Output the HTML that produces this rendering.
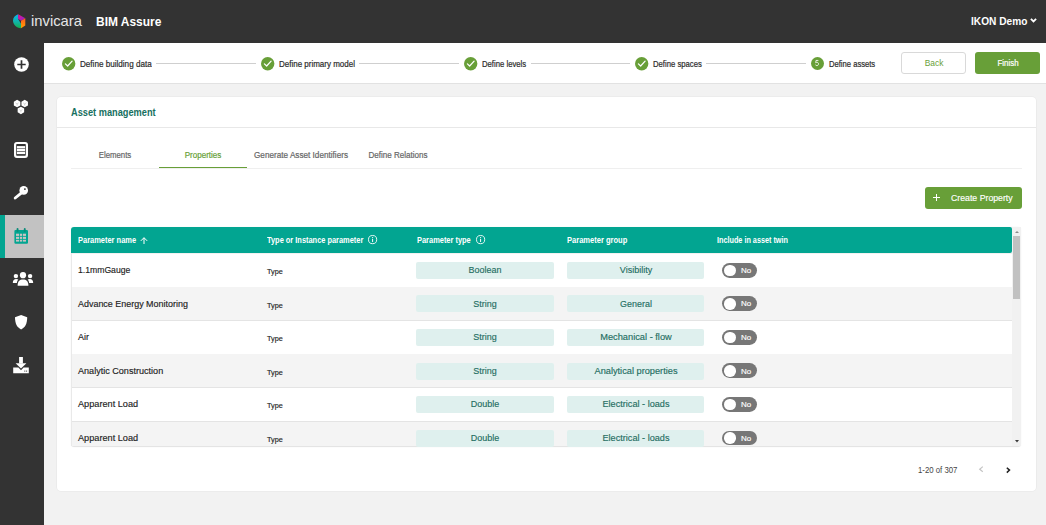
<!DOCTYPE html>
<html><head><meta charset="utf-8">
<style>
*{box-sizing:border-box;margin:0;padding:0}
html,body{width:1046px;height:525px;overflow:hidden;background:#f2f2f2;font-family:"Liberation Sans",sans-serif;color:#333;position:relative}
.abs{position:absolute}
.t{line-height:1;white-space:nowrap}
svg{position:absolute;overflow:visible}
</style></head><body>
<div class="abs" style="left:0.00px;top:0.00px;width:1046.00px;height:43.00px;background:#333333"></div>
<svg style="left:0;top:0" width="1" height="1">
<defs>
<linearGradient id="gc" x1="0" y1="0" x2="0" y2="1"><stop offset="0" stop-color="#0ab6f2"/><stop offset="0.55" stop-color="#12b3a6"/><stop offset="1" stop-color="#13b04c"/></linearGradient>
<linearGradient id="gm" x1="0" y1="0" x2="1" y2="1"><stop offset="0" stop-color="#e8188e"/><stop offset="1" stop-color="#8a1fcf"/></linearGradient>
<linearGradient id="go" x1="0" y1="0" x2="0" y2="1"><stop offset="0" stop-color="#ff5a1e"/><stop offset="1" stop-color="#ffa000"/></linearGradient>
</defs>
<path d="M18.2 14.2 C15.4 15.2 13.1 17.2 13.0 20.6 C12.9 24.6 16.4 27.9 21.0 28.3 L21.0 23.8 L18.0 18.7 Z" fill="url(#gc)"/>
<path d="M18.2 14.2 L25.3 18.2 L21.0 20.8 L18.0 18.7 Z" fill="url(#gm)"/>
<path d="M25.3 18.2 L25.3 25.6 L21.0 28.3 L21.0 20.8 Z" fill="url(#go)"/>
</svg>
<div class="abs t" style="left:31.30px;top:13.84px;font-size:14.6px;color:#e6e6e6;font-weight:normal;transform:scaleX(1.0134);transform-origin:0 0;">invicara</div>
<div class="abs t" style="left:96.40px;top:14.80px;font-size:13px;color:#fff;font-weight:bold;transform:scaleX(0.9207);transform-origin:0 0;">BIM Assure</div>
<div class="abs t" style="left:970.60px;top:15.64px;font-size:10.7px;color:#fff;font-weight:bold;transform:scaleX(0.9487);transform-origin:0 0;">IKON Demo</div>
<svg style="left:1029.8px;top:18.2px" width="7" height="5" viewBox="0 0 7 5"><path d="M0.9 0.9 L3.5 3.5 L6.1 0.9" stroke="#fff" stroke-width="1.8" fill="none"/></svg>
<div class="abs" style="left:0.00px;top:43.00px;width:43.50px;height:482.00px;background:#333333"></div>
<div class="abs" style="left:0.00px;top:215.00px;width:43.50px;height:43.00px;background:#c2c2c2"></div>
<div class="abs" style="left:0.00px;top:215.00px;width:5.00px;height:43.00px;background:#02a591"></div>
<svg style="left:13.6px;top:57px" width="15" height="15" viewBox="0 0 15 15">
<circle cx="7.5" cy="7.5" r="7.3" fill="#fff"/><path d="M7.5 3.3V11.7M3.3 7.5H11.7" stroke="#333" stroke-width="1.7"/></svg>
<svg style="left:0;top:0" width="1" height="1">
<polygon points="17.10,99.85 20.35,101.72 20.35,105.47 17.10,107.35 13.85,105.47 13.85,101.72" fill="#fff"/>
<polygon points="24.70,99.85 27.95,101.72 27.95,105.47 24.70,107.35 21.45,105.47 21.45,101.72" fill="#fff"/>
<polygon points="20.90,106.65 24.15,108.53 24.15,112.28 20.90,114.15 17.65,112.28 17.65,108.53" fill="#fff"/>
<path d="M17.1 103.9 L17.1 105.6 M17.1 103.9 L15.5 102.8 M17.1 103.9 L18.7 102.8 M24.7 103.9 L24.7 105.6 M24.7 103.9 L23.1 102.8 M24.7 103.9 L26.3 102.8 M20.9 110.7 L20.9 112.4 M20.9 110.7 L19.3 109.6 M20.9 110.7 L22.5 109.6" stroke="#b5b5b5" stroke-width="0.55"/>
</svg>
<svg style="left:0;top:0" width="1" height="1">
<rect x="15.1" y="143.0" width="11.8" height="13.8" rx="1.8" fill="none" stroke="#fff" stroke-width="2.2"/>
<rect x="16.9" y="146.1" width="8.2" height="2.3" fill="#fff"/><rect x="16.9" y="148.9" width="8.2" height="2.3" fill="#fff"/><rect x="16.9" y="151.8" width="8.2" height="2.3" fill="#fff"/>
</svg>
<svg style="left:0;top:0" width="1" height="1">
<circle cx="23.7" cy="190.4" r="4.3" fill="#fff"/><circle cx="24.9" cy="189.1" r="0.95" fill="#333"/>
<path d="M21.5 192.8 L15.2 198.0" stroke="#fff" stroke-width="2.9" stroke-linecap="round"/>
</svg>
<svg style="left:0;top:0" width="1" height="1">
<rect x="14.4" y="229.9" width="13.6" height="13.8" rx="1.2" fill="#02a591"/>
<rect x="16.6" y="228" width="1.9" height="3.9" rx="0.95" fill="#0b8c7a"/>
<rect x="23.8" y="228" width="1.9" height="3.9" rx="0.95" fill="#0b8c7a"/>
<g fill="#c9c2c2">
<rect x="16" y="233.7" width="3.1" height="2.2"/><rect x="19.9" y="233.7" width="2.1" height="2.2"/><rect x="22.8" y="233.7" width="3.2" height="2.2"/>
<rect x="16" y="236.8" width="3.1" height="2.1"/><rect x="19.9" y="236.8" width="2.1" height="2.1"/><rect x="22.8" y="236.8" width="3.2" height="2.1"/>
<rect x="16" y="239.8" width="3.1" height="1.8"/><rect x="19.9" y="239.8" width="2.1" height="1.8"/><rect x="22.8" y="239.8" width="3.2" height="1.8"/>
</g>
</svg>
<svg style="left:13px;top:272px" width="20" height="14" viewBox="0 0 20 14">
<g fill="#fff">
<circle cx="10" cy="3.2" r="3.1"/>
<path d="M4.6 13.8 C4.6 9.2 6.6 7.4 10 7.4 C13.4 7.4 15.4 9.2 15.4 13.8 Z"/>
<circle cx="2.9" cy="4.1" r="2.2"/>
<circle cx="17.1" cy="4.1" r="2.2"/>
<path d="M-0.2 11.1 C-0.2 8.2 1.1 6.9 3.2 6.9 C4.2 6.9 4.9 7.2 5.4 7.6 C4.4 8.6 3.9 9.8 3.9 11.1 Z"/>
<path d="M20.2 11.1 C20.2 8.2 18.9 6.9 16.8 6.9 C15.8 6.9 15.1 7.2 14.6 7.6 C15.6 8.6 16.1 9.8 16.1 11.1 Z"/>
</g></svg>
<svg style="left:14.9px;top:314.7px" width="13" height="15" viewBox="0 0 13 15">
<path d="M6.1 0 L12.2 2.2 C12.2 8.6 10.2 12.4 6.1 14.4 C2.0 12.4 0 8.6 0 2.2 Z" fill="#fff"/>
</svg>
<svg style="left:12.9px;top:356.9px" width="16" height="17" viewBox="0 0 16 17">
<g fill="#fff">
<rect x="6.1" y="0" width="3.8" height="6.5"/>
<path d="M2.6 6.2 L13.4 6.2 L8 11.6 Z"/>
<path d="M0.2 10.6 L5.4 10.6 L8 13.2 L10.6 10.6 L15.8 10.6 L15.8 16.2 L0.2 16.2 Z"/>
</g>
<rect x="11.3" y="13.6" width="1" height="1" fill="#333"/><rect x="13.1" y="13.6" width="1" height="1" fill="#333"/>
</svg>
<div class="abs" style="left:43.50px;top:43.00px;width:1002.50px;height:40.00px;background:#fff"></div>
<div class="abs" style="left:43.50px;top:82.50px;width:1002.50px;height:0.80px;background:#e2e2e2"></div>
<svg style="left:61.60px;top:56.55px" width="13.4" height="13.4" viewBox="0 0 13.4 13.4">
<circle cx="6.7" cy="6.7" r="6.7" fill="#689f38"/><path d="M3.4 6.85 L5.65 9.0 L10.1 4.2" stroke="#fff" stroke-width="1.25" fill="none" stroke-linecap="round" stroke-linejoin="round"/></svg>
<div class="abs t" style="left:79.60px;top:59.55px;font-size:8.8px;color:#2b2b2b;font-weight:normal;transform:scaleX(0.9216);transform-origin:0 0;-webkit-text-stroke:0.2px #2b2b2b;">Define building data</div>
<div class="abs" style="left:156.00px;top:63.00px;width:100.20px;height:1.00px;background:#cfcfcf"></div>
<svg style="left:260.80px;top:56.55px" width="13.4" height="13.4" viewBox="0 0 13.4 13.4">
<circle cx="6.7" cy="6.7" r="6.7" fill="#689f38"/><path d="M3.4 6.85 L5.65 9.0 L10.1 4.2" stroke="#fff" stroke-width="1.25" fill="none" stroke-linecap="round" stroke-linejoin="round"/></svg>
<div class="abs t" style="left:278.60px;top:59.55px;font-size:8.8px;color:#2b2b2b;font-weight:normal;transform:scaleX(0.9088);transform-origin:0 0;-webkit-text-stroke:0.2px #2b2b2b;">Define primary model</div>
<div class="abs" style="left:359.00px;top:63.00px;width:99.60px;height:1.00px;background:#cfcfcf"></div>
<svg style="left:463.60px;top:56.55px" width="13.4" height="13.4" viewBox="0 0 13.4 13.4">
<circle cx="6.7" cy="6.7" r="6.7" fill="#689f38"/><path d="M3.4 6.85 L5.65 9.0 L10.1 4.2" stroke="#fff" stroke-width="1.25" fill="none" stroke-linecap="round" stroke-linejoin="round"/></svg>
<div class="abs t" style="left:481.60px;top:59.55px;font-size:8.8px;color:#2b2b2b;font-weight:normal;transform:scaleX(0.8773);transform-origin:0 0;-webkit-text-stroke:0.2px #2b2b2b;">Define levels</div>
<div class="abs" style="left:530.60px;top:63.00px;width:99.70px;height:1.00px;background:#cfcfcf"></div>
<svg style="left:635.00px;top:56.55px" width="13.4" height="13.4" viewBox="0 0 13.4 13.4">
<circle cx="6.7" cy="6.7" r="6.7" fill="#689f38"/><path d="M3.4 6.85 L5.65 9.0 L10.1 4.2" stroke="#fff" stroke-width="1.25" fill="none" stroke-linecap="round" stroke-linejoin="round"/></svg>
<div class="abs t" style="left:652.80px;top:59.55px;font-size:8.8px;color:#2b2b2b;font-weight:normal;transform:scaleX(0.8751);transform-origin:0 0;-webkit-text-stroke:0.2px #2b2b2b;">Define spaces</div>
<div class="abs" style="left:706.00px;top:63.00px;width:100.00px;height:1.00px;background:#cfcfcf"></div>
<div class="abs" style="left:810.50px;top:56.55px;width:13.4px;height:13.4px;border-radius:50%;background:#689f38"></div>
<svg style="left:815.4px;top:59.9px" width="4" height="6" viewBox="0 0 4 6"><path d="M3.4 0.45 H1.0 L0.7 2.75 C1.05 2.45 1.5 2.35 1.95 2.35 C2.95 2.35 3.5 3.0 3.5 3.95 C3.5 4.95 2.8 5.6 1.9 5.6 C1.25 5.6 0.75 5.3 0.45 4.85" stroke="#fff" stroke-width="0.85" fill="none"/></svg>
<div class="abs t" style="left:828.60px;top:59.55px;font-size:8.8px;color:#2b2b2b;font-weight:normal;transform:scaleX(0.8665);transform-origin:0 0;-webkit-text-stroke:0.2px #2b2b2b;">Define assets</div>
<div class="abs" style="left:901.20px;top:52.20px;width:65.00px;height:22.10px;background:#fff;border:1px solid #d9d9d9;border-radius:3px"></div>
<div class="abs t" style="left:833.70px;width:200px;text-align:center;top:59.38px;font-size:9px;color:#6aa13a;font-weight:normal;transform:scaleX(0.9338);transform-origin:50% 0;">Back</div>
<div class="abs" style="left:975.00px;top:52.20px;width:65.00px;height:22.10px;background:#689f38;border-radius:3px"></div>
<div class="abs t" style="left:907.50px;width:200px;text-align:center;top:59.12px;font-size:8.6px;color:#fff;font-weight:normal;transform:scaleX(0.9196);transform-origin:50% 0;-webkit-text-stroke:0.2px #fff;">Finish</div>
<div class="abs" style="left:57.00px;top:97.30px;width:978.60px;height:393.80px;background:#fff;border-radius:4px;box-shadow:0 0 0 0.6px #e6e6e6"></div>
<div class="abs t" style="left:70.60px;top:106.99px;font-size:11px;color:#17705f;font-weight:bold;transform:scaleX(0.8387);transform-origin:0 0;">Asset management</div>
<div class="abs" style="left:57.00px;top:127.00px;width:978.60px;height:1.00px;background:#e8e8e8"></div>
<div class="abs t" style="left:14.60px;width:200px;text-align:center;top:150.80px;font-size:8.5px;color:#666;font-weight:normal;transform:scaleX(0.9174);transform-origin:50% 0;-webkit-text-stroke:0.2px #666;">Elements</div>
<div class="abs t" style="left:102.80px;width:200px;text-align:center;top:150.80px;font-size:8.5px;color:#689f38;font-weight:normal;transform:scaleX(0.9473);transform-origin:50% 0;-webkit-text-stroke:0.2px #689f38;">Properties</div>
<div class="abs t" style="left:200.70px;width:200px;text-align:center;top:150.80px;font-size:8.5px;color:#666;font-weight:normal;transform:scaleX(0.9611);transform-origin:50% 0;-webkit-text-stroke:0.2px #666;">Generate Asset Identifiers</div>
<div class="abs t" style="left:298.20px;width:200px;text-align:center;top:150.80px;font-size:8.5px;color:#666;font-weight:normal;transform:scaleX(0.9477);transform-origin:50% 0;-webkit-text-stroke:0.2px #666;">Define Relations</div>
<div class="abs" style="left:71.00px;top:167.60px;width:950.50px;height:1.80px;background:#efefef"></div>
<div class="abs" style="left:158.80px;top:166.70px;width:88.20px;height:1.50px;background:#689f38"></div>
<div class="abs" style="left:924.70px;top:186.70px;width:97.00px;height:22.00px;background:#689f38;border-radius:3px"></div>
<svg style="left:933.4px;top:194px" width="7" height="7" viewBox="0 0 7 7"><path d="M3.5 0V7M0 3.5H7" stroke="#fff" stroke-width="1"/></svg>
<div class="abs t" style="left:951.30px;top:193.72px;font-size:8.6px;color:#fff;font-weight:normal;transform:scaleX(1.0164);transform-origin:0 0;-webkit-text-stroke:0.15px #fff;">Create Property</div>
<div class="abs" style="left:71.00px;top:226.80px;width:950.00px;height:219.50px;background:#f1f1f1;border-radius:3px;box-shadow:0 0.6px 1px rgba(0,0,0,.12)"></div>
<div class="abs" style="left:71.00px;top:226.80px;width:941.00px;height:26.60px;background:#02a591;border-radius:3px 2px 2px 0"></div>
<div class="abs t" style="left:77.80px;top:235.60px;font-size:8.5px;color:#fff;font-weight:bold;transform:scaleX(0.8783);transform-origin:0 0;">Parameter name</div>
<svg style="left:139.5px;top:236.5px" width="8" height="8" viewBox="0 0 8 8"><path d="M4 7V0.8M0.8 3.9L4 0.7L7.2 3.9" stroke="#fff" stroke-width="1" fill="none"/></svg>
<div class="abs t" style="left:266.50px;top:235.60px;font-size:8.5px;color:#fff;font-weight:bold;transform:scaleX(0.8724);transform-origin:0 0;">Type or Instance parameter</div>
<svg style="left:368.10px;top:234.90px" width="9.2" height="9.2" viewBox="0 0 9.2 9.2"><circle cx="4.6" cy="4.6" r="4.1" stroke="#fff" stroke-width="0.9" fill="none"/><path d="M4.6 3.9V7" stroke="#fff" stroke-width="1"/><circle cx="4.6" cy="2.55" r="0.6" fill="#fff"/></svg>
<div class="abs t" style="left:416.50px;top:235.60px;font-size:8.5px;color:#fff;font-weight:bold;transform:scaleX(0.8750);transform-origin:0 0;">Parameter type</div>
<svg style="left:475.90px;top:234.90px" width="9.2" height="9.2" viewBox="0 0 9.2 9.2"><circle cx="4.6" cy="4.6" r="4.1" stroke="#fff" stroke-width="0.9" fill="none"/><path d="M4.6 3.9V7" stroke="#fff" stroke-width="1"/><circle cx="4.6" cy="2.55" r="0.6" fill="#fff"/></svg>
<div class="abs t" style="left:566.70px;top:235.60px;font-size:8.5px;color:#fff;font-weight:bold;transform:scaleX(0.8865);transform-origin:0 0;">Parameter group</div>
<div class="abs t" style="left:717.30px;top:235.60px;font-size:8.5px;color:#fff;font-weight:bold;transform:scaleX(0.8529);transform-origin:0 0;">Include in asset twin</div>
<div class="abs" style="left:71.00px;top:253.80px;width:941.00px;height:33.55px;background:#ffffff"></div>
<div class="abs" style="left:71.00px;top:286.55px;width:941.00px;height:0.80px;background:#e4e4e4"></div>
<div class="abs t" style="left:77.80px;top:266.21px;font-size:9.2px;color:#222;font-weight:normal;transform:scaleX(0.9400);transform-origin:0 0;-webkit-text-stroke:0.15px #222;">1.1mmGauge</div>
<div class="abs t" style="left:266.50px;top:267.95px;font-size:7.5px;color:#222;font-weight:normal;transform:scaleX(0.9656);transform-origin:0 0;-webkit-text-stroke:0.15px #222;">Type</div>
<div class="abs" style="left:416.20px;top:261.90px;width:137.40px;height:17.00px;background:#dff0ee;border-radius:2px"></div>
<div class="abs t" style="left:384.90px;width:200px;text-align:center;top:266.13px;font-size:9.3px;color:#1f6e62;font-weight:normal;transform:scaleX(0.9610);transform-origin:50% 0;-webkit-text-stroke:0.15px #1f6e62;">Boolean</div>
<div class="abs" style="left:566.90px;top:261.90px;width:137.20px;height:17.00px;background:#dff0ee;border-radius:2px"></div>
<div class="abs t" style="left:535.50px;width:200px;text-align:center;top:266.13px;font-size:9.3px;color:#1f6e62;font-weight:normal;transform:scaleX(0.9694);transform-origin:50% 0;-webkit-text-stroke:0.15px #1f6e62;">Visibility</div>
<div class="abs" style="left:721.90px;top:262.80px;width:35.20px;height:14.80px;background:#777;border-radius:7.4px"></div>
<div class="abs" style="left:724.30px;top:264.70px;width:11.40px;height:11.40px;background:#fff;border-radius:50%"></div>
<div class="abs t" style="left:741.00px;top:266.87px;font-size:7.6px;color:#fff;font-weight:normal;transform:scaleX(1.0502);transform-origin:0 0;-webkit-text-stroke:0.15px #fff;">No</div>
<div class="abs" style="left:71.00px;top:287.35px;width:941.00px;height:33.55px;background:#f4f4f4"></div>
<div class="abs" style="left:71.00px;top:320.10px;width:941.00px;height:0.80px;background:#e4e4e4"></div>
<div class="abs t" style="left:77.80px;top:299.76px;font-size:9.2px;color:#222;font-weight:normal;transform:scaleX(0.9733);transform-origin:0 0;-webkit-text-stroke:0.15px #222;">Advance Energy Monitoring</div>
<div class="abs t" style="left:266.50px;top:301.50px;font-size:7.5px;color:#222;font-weight:normal;transform:scaleX(0.9656);transform-origin:0 0;-webkit-text-stroke:0.15px #222;">Type</div>
<div class="abs" style="left:416.20px;top:295.45px;width:137.40px;height:17.00px;background:#dff0ee;border-radius:2px"></div>
<div class="abs t" style="left:384.90px;width:200px;text-align:center;top:299.68px;font-size:9.3px;color:#1f6e62;font-weight:normal;transform:scaleX(0.9633);transform-origin:50% 0;-webkit-text-stroke:0.15px #1f6e62;">String</div>
<div class="abs" style="left:566.90px;top:295.45px;width:137.20px;height:17.00px;background:#dff0ee;border-radius:2px"></div>
<div class="abs t" style="left:535.50px;width:200px;text-align:center;top:299.68px;font-size:9.3px;color:#1f6e62;font-weight:normal;transform:scaleX(0.9610);transform-origin:50% 0;-webkit-text-stroke:0.15px #1f6e62;">General</div>
<div class="abs" style="left:721.90px;top:296.35px;width:35.20px;height:14.80px;background:#777;border-radius:7.4px"></div>
<div class="abs" style="left:724.30px;top:298.25px;width:11.40px;height:11.40px;background:#fff;border-radius:50%"></div>
<div class="abs t" style="left:741.00px;top:300.42px;font-size:7.6px;color:#fff;font-weight:normal;transform:scaleX(1.0502);transform-origin:0 0;-webkit-text-stroke:0.15px #fff;">No</div>
<div class="abs" style="left:71.00px;top:320.90px;width:941.00px;height:33.55px;background:#ffffff"></div>
<div class="abs" style="left:71.00px;top:353.65px;width:941.00px;height:0.80px;background:#e4e4e4"></div>
<div class="abs t" style="left:77.80px;top:333.31px;font-size:9.2px;color:#222;font-weight:normal;transform:scaleX(0.9695);transform-origin:0 0;-webkit-text-stroke:0.15px #222;">Air</div>
<div class="abs t" style="left:266.50px;top:335.05px;font-size:7.5px;color:#222;font-weight:normal;transform:scaleX(0.9656);transform-origin:0 0;-webkit-text-stroke:0.15px #222;">Type</div>
<div class="abs" style="left:416.20px;top:329.00px;width:137.40px;height:17.00px;background:#dff0ee;border-radius:2px"></div>
<div class="abs t" style="left:384.90px;width:200px;text-align:center;top:333.23px;font-size:9.3px;color:#1f6e62;font-weight:normal;transform:scaleX(0.9633);transform-origin:50% 0;-webkit-text-stroke:0.15px #1f6e62;">String</div>
<div class="abs" style="left:566.90px;top:329.00px;width:137.20px;height:17.00px;background:#dff0ee;border-radius:2px"></div>
<div class="abs t" style="left:535.50px;width:200px;text-align:center;top:333.23px;font-size:9.3px;color:#1f6e62;font-weight:normal;transform:scaleX(0.9962);transform-origin:50% 0;-webkit-text-stroke:0.15px #1f6e62;">Mechanical - flow</div>
<div class="abs" style="left:721.90px;top:329.90px;width:35.20px;height:14.80px;background:#777;border-radius:7.4px"></div>
<div class="abs" style="left:724.30px;top:331.80px;width:11.40px;height:11.40px;background:#fff;border-radius:50%"></div>
<div class="abs t" style="left:741.00px;top:333.97px;font-size:7.6px;color:#fff;font-weight:normal;transform:scaleX(1.0502);transform-origin:0 0;-webkit-text-stroke:0.15px #fff;">No</div>
<div class="abs" style="left:71.00px;top:354.45px;width:941.00px;height:33.55px;background:#f4f4f4"></div>
<div class="abs" style="left:71.00px;top:387.20px;width:941.00px;height:0.80px;background:#e4e4e4"></div>
<div class="abs t" style="left:77.80px;top:366.86px;font-size:9.2px;color:#222;font-weight:normal;transform:scaleX(0.9871);transform-origin:0 0;-webkit-text-stroke:0.15px #222;">Analytic Construction</div>
<div class="abs t" style="left:266.50px;top:368.60px;font-size:7.5px;color:#222;font-weight:normal;transform:scaleX(0.9656);transform-origin:0 0;-webkit-text-stroke:0.15px #222;">Type</div>
<div class="abs" style="left:416.20px;top:362.55px;width:137.40px;height:17.00px;background:#dff0ee;border-radius:2px"></div>
<div class="abs t" style="left:384.90px;width:200px;text-align:center;top:366.78px;font-size:9.3px;color:#1f6e62;font-weight:normal;transform:scaleX(0.9633);transform-origin:50% 0;-webkit-text-stroke:0.15px #1f6e62;">String</div>
<div class="abs" style="left:566.90px;top:362.55px;width:137.20px;height:17.00px;background:#dff0ee;border-radius:2px"></div>
<div class="abs t" style="left:535.50px;width:200px;text-align:center;top:366.78px;font-size:9.3px;color:#1f6e62;font-weight:normal;transform:scaleX(0.9912);transform-origin:50% 0;-webkit-text-stroke:0.15px #1f6e62;">Analytical properties</div>
<div class="abs" style="left:721.90px;top:363.45px;width:35.20px;height:14.80px;background:#777;border-radius:7.4px"></div>
<div class="abs" style="left:724.30px;top:365.35px;width:11.40px;height:11.40px;background:#fff;border-radius:50%"></div>
<div class="abs t" style="left:741.00px;top:367.52px;font-size:7.6px;color:#fff;font-weight:normal;transform:scaleX(1.0502);transform-origin:0 0;-webkit-text-stroke:0.15px #fff;">No</div>
<div class="abs" style="left:71.00px;top:388.00px;width:941.00px;height:33.55px;background:#ffffff"></div>
<div class="abs" style="left:71.00px;top:420.75px;width:941.00px;height:0.80px;background:#e4e4e4"></div>
<div class="abs t" style="left:77.80px;top:400.41px;font-size:9.2px;color:#222;font-weight:normal;transform:scaleX(0.9973);transform-origin:0 0;-webkit-text-stroke:0.15px #222;">Apparent Load</div>
<div class="abs t" style="left:266.50px;top:402.15px;font-size:7.5px;color:#222;font-weight:normal;transform:scaleX(0.9656);transform-origin:0 0;-webkit-text-stroke:0.15px #222;">Type</div>
<div class="abs" style="left:416.20px;top:396.10px;width:137.40px;height:17.00px;background:#dff0ee;border-radius:2px"></div>
<div class="abs t" style="left:384.90px;width:200px;text-align:center;top:400.33px;font-size:9.3px;color:#1f6e62;font-weight:normal;transform:scaleX(0.9670);transform-origin:50% 0;-webkit-text-stroke:0.15px #1f6e62;">Double</div>
<div class="abs" style="left:566.90px;top:396.10px;width:137.20px;height:17.00px;background:#dff0ee;border-radius:2px"></div>
<div class="abs t" style="left:535.50px;width:200px;text-align:center;top:400.33px;font-size:9.3px;color:#1f6e62;font-weight:normal;transform:scaleX(0.9820);transform-origin:50% 0;-webkit-text-stroke:0.15px #1f6e62;">Electrical - loads</div>
<div class="abs" style="left:721.90px;top:397.00px;width:35.20px;height:14.80px;background:#777;border-radius:7.4px"></div>
<div class="abs" style="left:724.30px;top:398.90px;width:11.40px;height:11.40px;background:#fff;border-radius:50%"></div>
<div class="abs t" style="left:741.00px;top:401.07px;font-size:7.6px;color:#fff;font-weight:normal;transform:scaleX(1.0502);transform-origin:0 0;-webkit-text-stroke:0.15px #fff;">No</div>
<div class="abs" style="left:71.00px;top:421.55px;width:941.00px;height:24.75px;background:#f4f4f4"></div>
<div class="abs t" style="left:77.80px;top:433.96px;font-size:9.2px;color:#222;font-weight:normal;transform:scaleX(0.9973);transform-origin:0 0;-webkit-text-stroke:0.15px #222;">Apparent Load</div>
<div class="abs t" style="left:266.50px;top:435.70px;font-size:7.5px;color:#222;font-weight:normal;transform:scaleX(0.9656);transform-origin:0 0;-webkit-text-stroke:0.15px #222;">Type</div>
<div class="abs" style="left:416.20px;top:429.65px;width:137.40px;height:17.00px;background:#dff0ee;border-radius:2px"></div>
<div class="abs t" style="left:384.90px;width:200px;text-align:center;top:433.88px;font-size:9.3px;color:#1f6e62;font-weight:normal;transform:scaleX(0.9670);transform-origin:50% 0;-webkit-text-stroke:0.15px #1f6e62;">Double</div>
<div class="abs" style="left:566.90px;top:429.65px;width:137.20px;height:17.00px;background:#dff0ee;border-radius:2px"></div>
<div class="abs t" style="left:535.50px;width:200px;text-align:center;top:433.88px;font-size:9.3px;color:#1f6e62;font-weight:normal;transform:scaleX(0.9820);transform-origin:50% 0;-webkit-text-stroke:0.15px #1f6e62;">Electrical - loads</div>
<div class="abs" style="left:721.90px;top:430.55px;width:35.20px;height:14.80px;background:#777;border-radius:7.4px"></div>
<div class="abs" style="left:724.30px;top:432.45px;width:11.40px;height:11.40px;background:#fff;border-radius:50%"></div>
<div class="abs t" style="left:741.00px;top:434.62px;font-size:7.6px;color:#fff;font-weight:normal;transform:scaleX(1.0502);transform-origin:0 0;-webkit-text-stroke:0.15px #fff;">No</div>
<div class="abs" style="left:71.00px;top:253.40px;width:0.70px;height:192.90px;background:#e9e9e9"></div>
<div class="abs" style="left:1012.00px;top:226.80px;width:9.00px;height:219.50px;background:#f1f1f1"></div>
<svg style="left:1014.6px;top:230.9px" width="4" height="2" viewBox="0 0 4 2"><path d="M0 2L2 0L4 2Z" fill="#8a8a8a"/></svg>
<div class="abs" style="left:1013.00px;top:236.40px;width:6.80px;height:62.40px;background:#c1c1c1"></div>
<svg style="left:1014.5px;top:440px" width="4" height="2.4" viewBox="0 0 4 2.4"><path d="M0 0L2 2.4L4 0Z" fill="#3a3a3a"/></svg>
<div class="abs t" style="left:917.50px;top:465.87px;font-size:8.3px;color:#444;font-weight:normal;transform:scaleX(0.9381);transform-origin:0 0;">1-20 of 307</div>
<svg style="left:978.8px;top:466.3px" width="5" height="7" viewBox="0 0 5 7"><path d="M3.8 0.6L0.7 3.2L3.8 5.8" stroke="#c4c4c4" stroke-width="1.2" fill="none"/></svg>
<svg style="left:1005.5px;top:466.6px" width="5" height="7" viewBox="0 0 5 7"><path d="M0.8 0.7L3.5 3.1L0.8 5.6" stroke="#222" stroke-width="1.5" fill="none"/></svg>
</body></html>
